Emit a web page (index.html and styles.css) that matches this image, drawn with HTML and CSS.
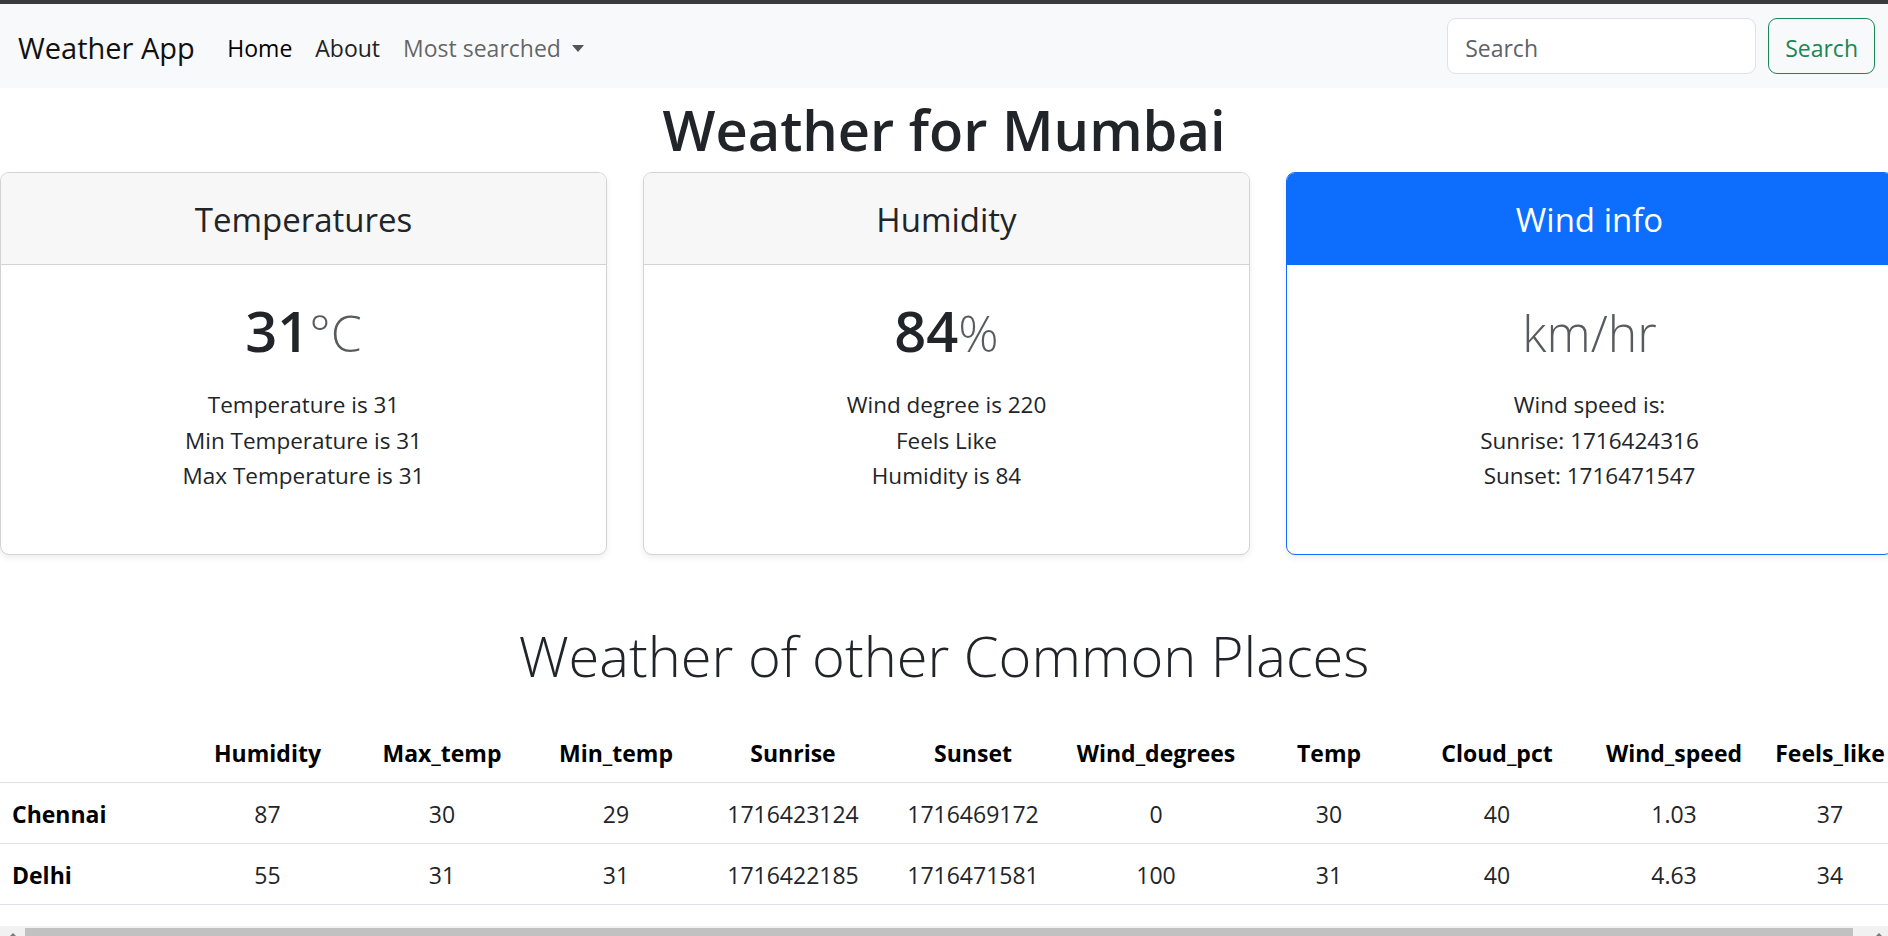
FILE: index.html
```html
<!DOCTYPE html>
<html lang="en">
<head>
<meta charset="utf-8">
<title>Weather App</title>
<link rel="stylesheet" href="styles.css">
</head>
<body>
<div class="topband"></div>
<nav class="navbar">
  <a class="brand" href="#">Weather App</a>
  <ul class="nav-links">
    <li><a class="nav-link active" href="#">Home</a></li>
    <li><a class="nav-link about" href="#">About</a></li>
    <li><a class="nav-link dropdown" href="#">Most searched<span class="caret"></span></a></li>
  </ul>
  <form class="search">
    <input class="search-input" type="search" placeholder="Search">
    <button class="search-btn" type="button">Search</button>
  </form>
</nav>
<main>
  <h1 class="page-title">Weather for Mumbai</h1>
  <div class="cards">
    <div class="card">
      <div class="card-header"><h4 class="card-head-title">Temperatures</h4></div>
      <div class="card-body">
        <h1 class="card-value">31<small class="unit">°C</small></h1>
        <ul class="card-list">
          <li>Temperature is 31</li>
          <li>Min Temperature is 31</li>
          <li>Max Temperature is 31</li>
        </ul>
      </div>
    </div>
    <div class="card">
      <div class="card-header"><h4 class="card-head-title">Humidity</h4></div>
      <div class="card-body">
        <h1 class="card-value">84<small class="unit">%</small></h1>
        <ul class="card-list">
          <li>Wind degree is 220</li>
          <li>Feels Like</li>
          <li>Humidity is 84</li>
        </ul>
      </div>
    </div>
    <div class="card card-primary">
      <div class="card-header"><h4 class="card-head-title">Wind info</h4></div>
      <div class="card-body">
        <h1 class="card-value"><small class="unit">km/hr</small></h1>
        <ul class="card-list">
          <li>Wind speed is:</li>
          <li>Sunrise: 1716424316</li>
          <li>Sunset: 1716471547</li>
        </ul>
      </div>
    </div>
  </div>

  <h1 class="section-title">Weather of other Common Places</h1>

  <table class="weather-table">
    <colgroup>
      <col><col><col><col><col><col><col><col><col><col><col>
    </colgroup>
    <thead>
      <tr>
        <th></th>
        <th>Humidity</th>
        <th>Max_temp</th>
        <th>Min_temp</th>
        <th>Sunrise</th>
        <th>Sunset</th>
        <th>Wind_degrees</th>
        <th>Temp</th>
        <th>Cloud_pct</th>
        <th>Wind_speed</th>
        <th>Feels_like</th>
      </tr>
    </thead>
    <tbody>
      <tr>
        <th class="city">Chennai</th>
        <td>87</td><td>30</td><td>29</td><td>1716423124</td><td>1716469172</td><td>0</td><td>30</td><td>40</td><td>1.03</td><td>37</td>
      </tr>
      <tr>
        <th class="city">Delhi</th>
        <td>55</td><td>31</td><td>31</td><td>1716422185</td><td>1716471581</td><td>100</td><td>31</td><td>40</td><td>4.63</td><td>34</td>
      </tr>
    </tbody>
  </table>
</main>

<div class="hscroll">
  <span class="arrow arrow-left"></span>
  <span class="thumb"></span>
  <span class="arrow arrow-right"></span>
</div>
</body>
</html>
```

FILE: styles.css
```css
html, body {
  margin: 0;
  padding: 0;
  overflow: hidden;
  background: #fff;
}

body {
  font-family: "Open Sans", "Noto Sans", "Liberation Sans", sans-serif;
  font-size: 24px;
  line-height: 1.5;
  color: #212529;
  width: 1888px;
  height: 936px;
}

.topband {
  height: 4px;
  background: #3b3b3b;
}

/* ---------- navbar ---------- */
.navbar {
  display: flex;
  align-items: center;
  height: 84px;
  box-sizing: border-box;
  padding: 0 13px 0 18px;
  background: #f8f9fa;
}

.brand {
  padding-top: 3px;
  font-size: 29px;
  line-height: 1.5;
  color: #111;
  text-decoration: none;
  margin-right: 21px;
}

.nav-links {
  display: flex;
  list-style: none;
  margin: 0;
  padding: 0;
}

.nav-link {
  display: block;
  padding: 14px 11.5px 10px;
  font-size: 23px;
  text-decoration: none;
  color: rgba(0, 0, 0, 0.62);
}

.nav-link.active { color: #000; }
.nav-link.about { color: #222; }

.caret {
  display: inline-block;
  margin-left: 11px;
  vertical-align: 5px;
  border-top: 7px solid #555;
  border-left: 6.5px solid transparent;
  border-right: 6.5px solid transparent;
}

.search {
  display: flex;
  margin-left: auto;
  gap: 12px;
}

.search-input {
  width: 309px;
  height: 56px;
  box-sizing: border-box;
  padding: 11px 17px 7px;
  border: 1px solid #dee2e6;
  border-radius: 9px;
  background: #fff;
  font-family: inherit;
  font-size: 23px;
  color: #212529;
  outline: none;
}

.search-input::placeholder { color: #5f6266; }

.search-btn {
  height: 56px;
  box-sizing: border-box;
  padding: 3px 16px 0;
  border: 1px solid #198754;
  border-radius: 9px;
  background: transparent;
  color: #198754;
  font-family: inherit;
  font-size: 23px;
}

/* ---------- heading ---------- */
.page-title {
  margin: 0 0 11px;
  height: 73px;
  text-align: center;
  font-size: 56px;
  font-weight: 600;
  line-height: 82px;
  color: #212529;
}

/* ---------- cards ---------- */
.cards {
  display: grid;
  grid-template-columns: 607px 607px 607px;
  column-gap: 36px;
}

.card {
  border: 1px solid #d3d3d3;
  border-radius: 9px;
  background: #fff;
  box-shadow: 0 3px 6px rgba(0, 0, 0, 0.07);
  height: 383px;
  box-sizing: border-box;
  overflow: hidden;
  text-align: center;
}

.card-header {
  height: 92px;
  box-sizing: border-box;
  padding-top: 3px;
  background: #f7f7f7;
  border-bottom: 1px solid #d3d3d3;
  display: flex;
  align-items: center;
  justify-content: center;
}

.card-head-title {
  margin: 0;
  font-size: 33px;
  font-weight: 400;
  line-height: 1.2;
}

.card-primary { border-color: #0d6efd; }
.card-primary .card-header {
  background: #0d6efd;
  border-bottom-color: #0d6efd;
  color: #fff;
}

.card-body {
  padding: 24px 24px 0;
}

.card-value {
  margin: 0;
  height: 72px;
  font-size: 56px;
  font-weight: 600;
  line-height: 82px;
  color: #212529;
}

.unit {
  font-size: 50px;
  font-weight: 300;
  color: #595c5f;
}

.card-list {
  list-style: none;
  margin: 26px 0 0;
  padding: 0;
  font-size: 22.5px;
  line-height: 35.5px;
}

/* ---------- section title ---------- */
.section-title {
  margin: 63px 0 0;
  height: 104px;
  text-align: center;
  font-size: 56px;
  font-weight: 300;
  line-height: 74px;
  color: #212529;
}

/* ---------- table ---------- */
.weather-table {
  border-collapse: collapse;
  table-layout: fixed;
  width: 1897px;
  font-size: 23px;
  line-height: 36px;
}

.weather-table col:nth-child(1)  { width: 180px; }
.weather-table col:nth-child(2)  { width: 175px; }
.weather-table col:nth-child(3)  { width: 174px; }
.weather-table col:nth-child(4)  { width: 174px; }
.weather-table col:nth-child(5)  { width: 180px; }
.weather-table col:nth-child(6)  { width: 180px; }
.weather-table col:nth-child(7)  { width: 186px; }
.weather-table col:nth-child(8)  { width: 160px; }
.weather-table col:nth-child(9)  { width: 176px; }
.weather-table col:nth-child(10) { width: 178px; }
.weather-table col:nth-child(11) { width: 134px; }

.weather-table th,
.weather-table td {
  padding: 13px 12px 11px;
  border-bottom: 1px solid #dee2e6;
  text-align: center;
  white-space: nowrap;
  color: #000;
}

.weather-table th { font-weight: 700; }
.weather-table td { color: #212529; }
.weather-table th.city { text-align: left; }

/* ---------- fake horizontal scrollbar ---------- */
.hscroll {
  position: fixed;
  left: 0;
  right: 0;
  bottom: 0;
  height: 10px;
  background: #f1f1f1;
}

.thumb {
  position: absolute;
  left: 25px;
  width: 1828px;
  top: 2px;
  bottom: 0;
  background: #c1c1c1;
}

.arrow {
  position: absolute;
  bottom: 0;
  width: 0;
  height: 0;
  border-left: 3px solid transparent;
  border-right: 3px solid transparent;
  border-bottom: 3px solid #7a7a7a;
}

.arrow-left { left: 10px; }
.arrow-right { right: 6px; }
```
